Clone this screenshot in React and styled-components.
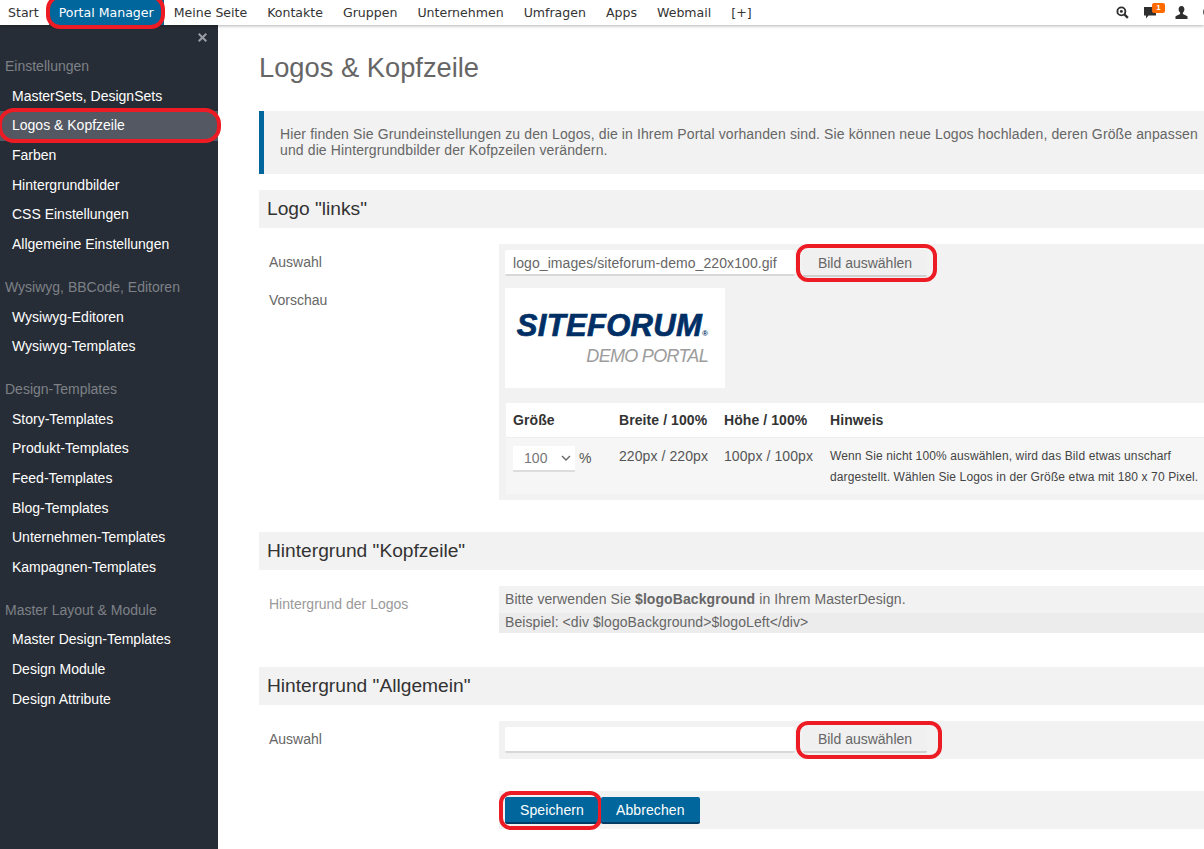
import styled, { createGlobalStyle } from "styled-components";

const topLinks = [
  "Start",
  "Portal Manager",
  "Meine Seite",
  "Kontakte",
  "Gruppen",
  "Unternehmen",
  "Umfragen",
  "Apps",
  "Webmail",
  "[+]",
];

const menuGroups = [
  {
    title: "Einstellungen",
    items: [
      "MasterSets, DesignSets",
      "Logos & Kopfzeile",
      "Farben",
      "Hintergrundbilder",
      "CSS Einstellungen",
      "Allgemeine Einstellungen",
    ],
  },
  { title: "Wysiwyg, BBCode, Editoren", items: ["Wysiwyg-Editoren", "Wysiwyg-Templates"] },
  {
    title: "Design-Templates",
    items: [
      "Story-Templates",
      "Produkt-Templates",
      "Feed-Templates",
      "Blog-Templates",
      "Unternehmen-Templates",
      "Kampagnen-Templates",
    ],
  },
  {
    title: "Master Layout & Module",
    items: ["Master Design-Templates", "Design Module", "Design Attribute"],
  },
];

function App() {
  return (
    <>
      <GlobalStyle />
      <Page>
        <TopBar>
          <TopNav>
            {topLinks.map((link) => (
              <TopLink key={link} $active={link === "Portal Manager"}>
                {link}
                {link === "Portal Manager" && <NavMark />}
              </TopLink>
            ))}
          </TopNav>
          <TopIcons>
            <svg width="13" height="13" viewBox="0 0 14 14">
              <circle cx="5.8" cy="5.8" r="4.3" fill="none" stroke="#2f2f2f" strokeWidth="2" />
              <circle cx="5.8" cy="5.8" r="1.6" fill="#2f2f2f" />
              <path d="M9 9l3.800 3.800" stroke="#2f2f2f" strokeWidth="2.400" />
            </svg>
            <Bubble>
              <svg width="13" height="13" viewBox="0 0 13 13">
                <path d="M0 1h12v8.500H4.500L2 12.500V9.500H0z" fill="#2f2f2f" />
              </svg>
              <Badge>1</Badge>
            </Bubble>
            <svg width="13" height="13" viewBox="0 0 13 13">
              <path
                d="M6.500 0C8.400 0 9.400 1.400 9.400 3.300c0 1.500-.7 2.800-1.500 3.500v1.100l4.600 2.300V13H.5v-2.800l4.600-2.300V6.800C4.300 6.100 3.600 4.800 3.600 3.300 3.600 1.400 4.600 0 6.500 0z"
                fill="#2f2f2f"
              />
            </svg>
            <EdgeIcon />
          </TopIcons>
        </TopBar>
        <Body>
          <Sidebar>
            <CloseButton>
              <svg width="9" height="9" viewBox="0 0 9 9">
                <path d="M.7.7l7.600 7.600M8.300.7L.7 8.300" stroke="#9a9ea4" strokeWidth="2" />
              </svg>
            </CloseButton>
            {menuGroups.map((group) => (
              <MenuGroup key={group.title}>
                <GroupTitle>{group.title}</GroupTitle>
                {group.items.map((item) => (
                  <MenuItem key={item} $active={item === "Logos & Kopfzeile"}>
                    {item}
                    {item === "Logos & Kopfzeile" && <MenuMark />}
                  </MenuItem>
                ))}
              </MenuGroup>
            ))}
          </Sidebar>
          <Main>
            <Title>Logos &amp; Kopfzeile</Title>
            <Info>
              Hier finden Sie Grundeinstellungen zu den Logos, die in Ihrem Portal vorhanden sind. Sie können neue Logos hochladen, deren Größe anpassen
              <br />
              und die Hintergrundbilder der Kofpzeilen verändern.
            </Info>

            <SectionTitle>Logo "links"</SectionTitle>
            <FormRow>
              <Labels>
                <Label>Auswahl</Label>
                <Label>Vorschau</Label>
              </Labels>
              <Panel>
                <PickerRow>
                  <PathInput>logo_images/siteforum-demo_220x100.gif</PathInput>
                  <PickButton $tall>
                    Bild auswählen
                    <PickMark />
                  </PickButton>
                </PickerRow>
                <LogoBox>
                  <LogoMain>SITEFORUM<LogoDot>®</LogoDot></LogoMain>
                  <LogoSub>DEMO PORTAL</LogoSub>
                </LogoBox>
                <SizeTable>
                  <thead>
                    <tr>
                      <SizeHead $w="106px">Größe</SizeHead>
                      <SizeHead $w="105px">Breite / 100%</SizeHead>
                      <SizeHead $w="106px">Höhe / 100%</SizeHead>
                      <SizeHead>Hinweis</SizeHead>
                    </tr>
                  </thead>
                  <tbody>
                    <tr>
                      <SizeCell>
                        <SizeSelect>
                          100
                          <svg width="10" height="6" viewBox="0 0 10 6">
                            <path d="M1 1l4 4 4-4" fill="none" stroke="#666" strokeWidth="1.400" />
                          </svg>
                        </SizeSelect>
                        <Percent>%</Percent>
                      </SizeCell>
                      <SizeCell>220px / 220px</SizeCell>
                      <SizeCell>100px / 100px</SizeCell>
                      <HintCell>
                        Wenn Sie nicht 100% auswählen, wird das Bild etwas unscharf
                        <br />
                        dargestellt. Wählen Sie Logos in der Größe etwa mit 180 x 70 Pixel.
                      </HintCell>
                    </tr>
                  </tbody>
                </SizeTable>
              </Panel>
            </FormRow>

            <SectionTitle $top="32px">Hintergrund "Kopfzeile"</SectionTitle>
            <FormRow>
              <Labels>
                <Label $muted>Hintergrund der Logos</Label>
              </Labels>
              <NotePanel>
                <NoteLine>
                  Bitte verwenden Sie <b>$logoBackground</b> in Ihrem MasterDesign.
                </NoteLine>
                <NoteLine $shade>Beispiel: &lt;div $logoBackground&gt;$logoLeft&lt;/div&gt;</NoteLine>
              </NotePanel>
            </FormRow>

            <SectionTitle $top="34px">Hintergrund "Allgemein"</SectionTitle>
            <FormRow>
              <Labels>
                <Label>Auswahl</Label>
              </Labels>
              <Panel>
                <PickerRow>
                  <PathInput />
                  <PickButton>
                    Bild auswählen
                    <PickMark $wide />
                  </PickButton>
                </PickerRow>
              </Panel>
            </FormRow>

            <Actions>
              <ActionButton>
                Speichern
                <SaveMark />
              </ActionButton>
              <ActionButton>Abbrechen</ActionButton>
            </Actions>
          </Main>
        </Body>
      </Page>
    </>
  );
}

const GlobalStyle = createGlobalStyle`
  html, body {
    margin: 0;
    height: 100%;
    overflow: hidden;
    background: #fff;
  }
  * {
    box-sizing: border-box;
  }
`;

const Page = styled.div`
  width: 1204px;
  height: 849px;
  overflow: hidden;
  display: flex;
  flex-direction: column;
  font-family: "Liberation Sans", Arial, sans-serif;
  font-size: 14px;
  color: #666;
`;

const TopBar = styled.header`
  flex: none;
  height: 25px;
  display: flex;
  justify-content: space-between;
  background: #fff;
  box-shadow: 0 1px 3px rgba(0, 0, 0, 0.3);
  position: relative;
  z-index: 2;
`;

const TopNav = styled.nav`
  display: flex;
  font-family: "DejaVu Sans", Verdana, sans-serif;
  font-size: 12.55px;
`;

const TopLink = styled.a`
  position: relative;
  height: 25px;
  line-height: 26px;
  padding: 0 10px;
  color: ${(p) => (p.$active ? "#fff" : "#333")};
  background: ${(p) => (p.$active ? "#00669c" : "transparent")};
  &:first-child {
    padding-left: 8px;
  }
`;

const TopIcons = styled.div`
  display: flex;
  align-items: center;
  gap: 15px;
  margin-right: -7px;
  padding-bottom: 1px;
`;

const Bubble = styled.span`
  position: relative;
  display: flex;
  margin-right: 3px;
`;

const Badge = styled.span`
  position: absolute;
  left: 8px;
  top: -3px;
  width: 13px;
  height: 10px;
  border-radius: 2px;
  background: #ff6a00;
  color: #fff;
  font-size: 8px;
  line-height: 10px;
  font-weight: bold;
  text-align: center;
`;

const EdgeIcon = styled.span`
  width: 8px;
  height: 8px;
  border-radius: 50%;
  background: #555;
`;

const Body = styled.div`
  flex: 1;
  display: flex;
  min-height: 0;
`;

const Sidebar = styled.aside`
  flex: none;
  width: 218px;
  background: #272d36;
  padding-top: 32px;
  position: relative;
`;

const CloseButton = styled.span`
  position: absolute;
  left: 198px;
  top: 8px;
  display: flex;
`;

const MenuGroup = styled.div`
  margin-bottom: 18px;
`;

const GroupTitle = styled.div`
  height: 24.7px;
  line-height: 18px;
  padding-left: 5px;
  color: #7d8187;
`;

const MenuItem = styled.a`
  position: relative;
  display: block;
  height: 29.7px;
  line-height: 29.7px;
  padding-left: 12px;
  color: #fff;
  background: ${(p) => (p.$active ? "#535863" : "transparent")};
`;

const RedMark = styled.span`
  position: absolute;
  border: 4px solid #ed1c24;
  pointer-events: none;
`;

const NavMark = styled(RedMark)`
  left: -3px;
  right: -1px;
  top: -5px;
  height: 34px;
  border-radius: 14px;
`;

const MenuMark = styled(RedMark)`
  left: -2px;
  width: 223px;
  top: -3px;
  height: 35px;
  border-radius: 16px;
`;

const PickMark = styled(RedMark)`
  left: -7px;
  width: ${(p) => (p.$wide ? "146px" : "141px")};
  top: -6px;
  height: 38px;
  border-radius: 12px;
`;

const SaveMark = styled(RedMark)`
  left: -6px;
  right: -3px;
  top: -6px;
  height: 39px;
  border-radius: 12px;
`;

const Main = styled.main`
  flex: none;
  width: 1100px;
  padding: 0 0 0 41px;
  letter-spacing: 0.08px;
`;

const Title = styled.h1`
  margin: 26px 0 27px;
  font-size: 27.3px;
  line-height: 33px;
  font-weight: normal;
  letter-spacing: 0;
  color: #666;
`;

const Info = styled.div`
  height: 63px;
  padding: 15px 0 0 16px;
  border-left: 5px solid #00669c;
  background: #f2f2f2;
  line-height: 16px;
  letter-spacing: 0.12px;
  white-space: nowrap;
  color: #666;
`;

const SectionTitle = styled.h2`
  margin: ${(p) => p.$top || "16px"} 0 16px;
  height: 38px;
  line-height: 37px;
  padding-left: 8px;
  background: #f2f2f2;
  font-size: 19.2px;
  font-weight: normal;
  letter-spacing: 0;
  color: #333;
`;

const FormRow = styled.div`
  display: flex;
`;

const Labels = styled.div`
  flex: none;
  width: 240px;
  padding: 9px 0 0 10px;
`;

const Label = styled.div`
  height: 38px;
  line-height: 18px;
  letter-spacing: 0;
  color: ${(p) => (p.$muted ? "#999" : "#666")};
  &:last-child {
    height: 18px;
  }
`;

const Panel = styled.div`
  flex: 1;
  background: #f2f2f2;
  padding: 6px;
`;

const PickerRow = styled.div`
  display: flex;
  align-items: flex-start;
  gap: 8px;
`;

const PathInput = styled.div`
  width: 290px;
  height: 26px;
  line-height: 27px;
  padding-left: 8px;
  background: #fff;
  border-radius: 2px;
  border-bottom: 2px solid #d8d8d8;
  color: #666;
`;

const PickButton = styled.button`
  position: relative;
  width: 124px;
  height: ${(p) => (p.$tall ? "27px" : "26px")};
  padding: 0;
  border: 0;
  border-bottom: 2px solid #cfcfcf;
  border-radius: 2px;
  background: #f0f0f0;
  font: inherit;
  letter-spacing: 0;
  color: #666;
`;

const LogoBox = styled.div`
  width: 220px;
  height: 100px;
  margin-top: 11px;
  padding: 25px 17px 0 0;
  background: #fff;
  display: flex;
  flex-direction: column;
  align-items: flex-end;
  overflow: hidden;
`;

const LogoMain = styled.div`
  font-size: 31px;
  line-height: 26px;
  font-weight: bold;
  font-style: italic;
  letter-spacing: 0.3px;
  -webkit-text-stroke: 0.7px #002f66;
  color: #002f66;
  white-space: nowrap;
`;

const LogoDot = styled.span`
  font-size: 8px;
  letter-spacing: 0;
  -webkit-text-stroke: 0;
`;

const LogoSub = styled.div`
  margin-top: -1px;
  font-size: 18px;
  line-height: 20px;
  font-style: italic;
  letter-spacing: -0.7px;
  color: #9c9c9c;
`;

const SizeTable = styled.table`
  width: 700px;
  margin: 15px 0 0 1px;
  border-collapse: collapse;
  background: #f6f6f6;
`;

const SizeHead = styled.th`
  width: ${(p) => p.$w || "auto"};
  height: 34px;
  padding: 0 0 0 7px;
  background: #fff;
  border-bottom: 1px solid #eee;
  text-align: left;
  font-weight: bold;
  color: #333;
`;

const SizeCell = styled.td`
  height: 57px;
  padding: 8px 0 0 7px;
  vertical-align: top;
  line-height: 20px;
  white-space: nowrap;
  color: #555;
`;

const HintCell = styled(SizeCell)`
  font-size: 12px;
  line-height: 21px;
  letter-spacing: 0.12px;
  color: #444;
`;

const SizeSelect = styled.span`
  display: inline-flex;
  align-items: center;
  justify-content: space-between;
  width: 62px;
  height: 26px;
  padding: 0 4px 0 11px;
  background: #fff;
  border-bottom: 2px solid #ddd;
  color: #777;
`;

const Percent = styled.span`
  margin-left: 4px;
`;

const NotePanel = styled.div`
  flex: 1;
  background: #f2f2f2;
`;

const NoteLine = styled.div`
  height: ${(p) => (p.$shade ? "20px" : "27px")};
  line-height: ${(p) => (p.$shade ? "18px" : "26px")};
  padding-left: 6px;
  background: ${(p) => (p.$shade ? "#ececec" : "transparent")};
`;

const Actions = styled.div`
  margin: 32px 0 0 240px;
  height: 38px;
  padding: 6px;
  background: #f2f2f2;
  display: flex;
  gap: 2px;
`;

const ActionButton = styled.button`
  position: relative;
  height: 27px;
  padding: 0 15px;
  border: 0;
  border-bottom: 2px solid #003b66;
  border-radius: 2px;
  background: #00669c;
  color: #fff;
  font: inherit;
  letter-spacing: 0.1px;
`;

export default App;
